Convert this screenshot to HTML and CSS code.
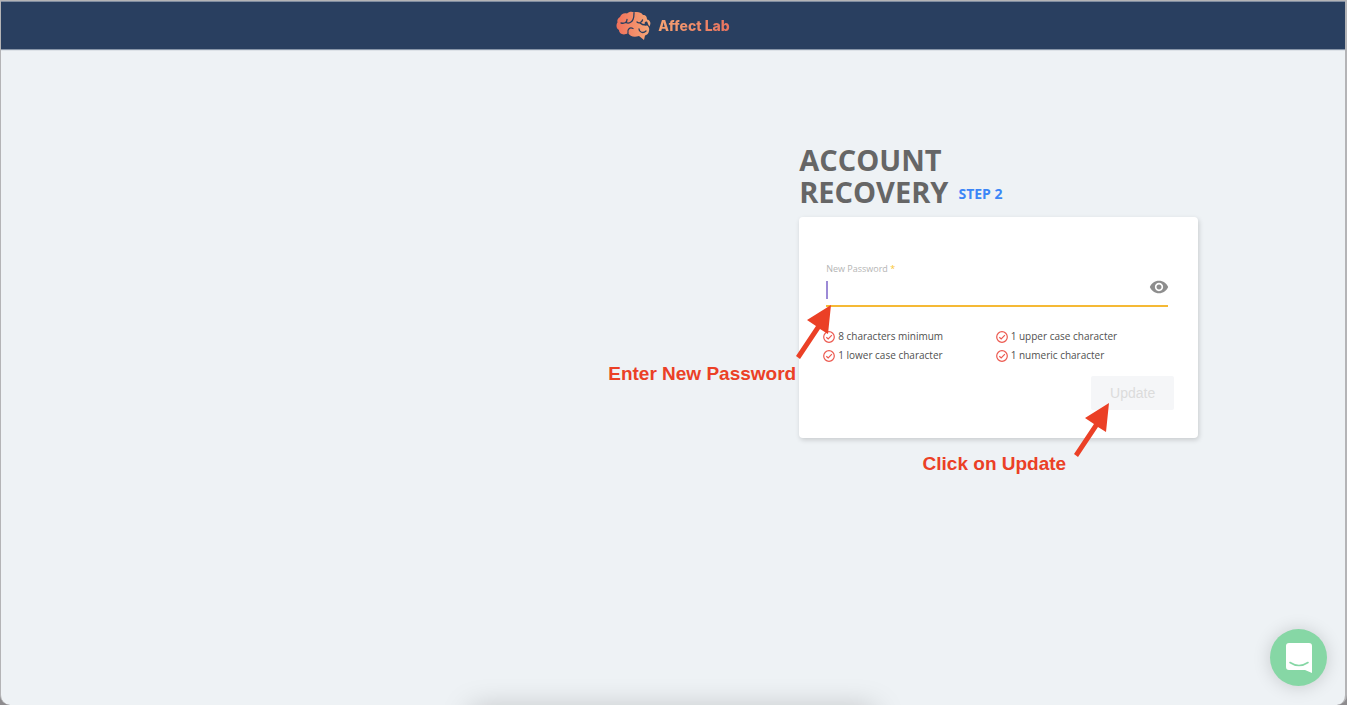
FILE: index.html
```html
<!DOCTYPE html>
<html lang="en">
<head>
    <meta charset="UTF-8">
    <meta name="viewport" content="width=device-width, initial-scale=1.0">
    <title>Affect Lab - Account Recovery</title>
    <link rel="stylesheet" href="styles.css">
</head>
<body>
    <div class="window">
        <header class="topbar">
            <a class="brand" href="#">
                <svg class="brand-icon" viewBox="0 0 36 30" aria-hidden="true">
                    <defs>
                        <linearGradient id="brain" x1="0" y1="0" x2="1" y2="0">
                            <stop offset="0" stop-color="#f0705a"/>
                            <stop offset="1" stop-color="#f6a878"/>
                        </linearGradient>
                    </defs>
                    <path fill="url(#brain)" d="M4 6C5 3 8 1.500 11 2.500C13 .5 16 0 18 1.500C21 .5 25 1 27 4C30 4 31 6 31 8.500C34 9 35 12 34 14L33.500 15.500C32 14 32 12 31 10.500C29 10 28 12 29 14C32 14 34 17 33 20C32.500 23 30.500 24 29 24.500L28 29L23 25C18 26.500 14 25.500 12 22C8 25 3 23 3 19C0 17.500 0 13.500 1.500 11.500C.8 9 2 7 4 6Z"/>
                    <g fill="none" stroke="#293f60" stroke-width="1.300" stroke-linecap="round">
                        <path d="M5 12C9 13 11 11 11 8.500M10 11.500C13 13 16 11 17 8.500C18 6.500 18 4 18 2M12 22C11 18 14 16 17 17.500M21 11C23 13 26 11 26.500 9M24 12C26 14 29 14 30 14M30 20C27 23 23 21 23 18"/>
                    </g>
                </svg>
                <span>Affect Lab</span>
            </a>
        </header>

        <main class="page">
            <section class="recovery">
                <div class="heading">
                    <h1 class="title">Account Recovery</h1>
                    <span class="step">Step 2</span>
                </div>

                <form class="card">
                    <label class="field-label" for="password">New Password <span class="required">*</span></label>
                    <div class="field">
                        <span class="caret"></span>
                        <input class="field-input" id="password" type="password" required>
                        <button class="reveal" type="button" aria-label="Show password">
                            <svg viewBox="0 0 24 24" width="20" height="20"><path fill="#8e8e8e" d="M12 4.500C7 4.500 2.730 7.610 1 12c1.730 4.390 6 7.500 11 7.500s9.270-3.110 11-7.500c-1.730-4.390-6-7.500-11-7.500zM12 17c-2.760 0-5-2.240-5-5s2.240-5 5-5 5 2.240 5 5-2.240 5-5 5zm0-8c-1.660 0-3 1.340-3 3s1.340 3 3 3 3-1.340 3-3-1.340-3-3-3z"/></svg>
                        </button>
                    </div>

                    <ul class="rules">
                        <li><svg class="check" viewBox="0 0 12 12"><circle cx="6" cy="6" r="5.300"/><path d="M3.300 6.200L5.200 8L8.900 4.200"/></svg>8 characters minimum</li>
                        <li><svg class="check" viewBox="0 0 12 12"><circle cx="6" cy="6" r="5.300"/><path d="M3.300 6.200L5.200 8L8.900 4.200"/></svg>1 upper case character</li>
                        <li><svg class="check" viewBox="0 0 12 12"><circle cx="6" cy="6" r="5.300"/><path d="M3.300 6.200L5.200 8L8.900 4.200"/></svg>1 lower case character</li>
                        <li><svg class="check" viewBox="0 0 12 12"><circle cx="6" cy="6" r="5.300"/><path d="M3.300 6.200L5.200 8L8.900 4.200"/></svg>1 numeric character</li>
                    </ul>

                    <button class="update" type="submit" disabled>Update</button>

                    <!-- help callouts over the form -->
                    <div class="callout callout-password">
                        <span>Enter New Password</span>
                        <svg class="arrow" viewBox="0 0 36 54"><path d="M0 51L20 21L11 15L35 0L32 29L24 24L4 54Z"/></svg>
                    </div>
                    <div class="callout callout-update">
                        <span>Click on Update</span>
                        <svg class="arrow" viewBox="0 0 36 54"><path d="M0 51L20 21L11 15L35 0L32 29L24 24L4 54Z"/></svg>
                    </div>
                </form>
            </section>
        </main>

        <div class="dock-shadow"></div>

        <button class="chat" type="button" aria-label="Open chat">
            <svg viewBox="0 0 28 32" width="28" height="32">
                <path fill="#fff" d="M4 1H24Q27 1 27 4V31L20 28H4Q1 28 1 25V4Q1 1 4 1Z"/>
                <path fill="none" stroke="#86d7a5" stroke-width="1.600" stroke-linecap="round" d="M5 20.500Q14 26.500 23 20.500"/>
            </svg>
        </button>
    </div>
</body>
</html>
```
FILE: styles.css
```css
* {
    box-sizing: border-box;
}

html, body {
    height: 100%;
    margin: 0;
    background-color: #8d8b8e;
    font-family: "Open Sans", "Noto Sans", sans-serif;
}

.window {
    position: relative;
    display: flex;
    flex-direction: column;
    min-height: 100%;
    overflow: hidden;
    border: 1px solid #b4b4b6;
    border-width: 1px 2px 0 1px;
    border-radius: 0 0 10px 10px;
    background-color: #eef2f5;
}

.topbar {
    display: flex;
    justify-content: center;
    align-items: center;
    height: 48px;
    border-top: 1px solid #7f8ca0;
    background-color: #293f60;
    box-shadow: 0 1px 1px #8795a8;
}

.brand {
    display: flex;
    align-items: center;
    gap: 6px;
    color: #f39470;
    font-family: Inter, sans-serif;
    font-size: 14px;
    font-weight: 800;
    text-decoration: none;
}

.brand span {
    background: linear-gradient(to right, #f6a373, #e8735f);
    background-clip: text;
    color: transparent;
}

.brand-icon {
    width: 36px;
    height: 30px;
}

.page {
    display: flex;
    flex: 1;
    justify-content: flex-end;
    align-items: flex-start;
    padding: 95px 11% 0 0;
}

.recovery {
    width: 399px;
    margin-right: -1px;
}

.heading {
    display: flex;
    align-items: flex-end;
    gap: 10px;
    margin-bottom: 9px;
    text-transform: uppercase;
}

.title {
    width: min-content;
    margin: 0;
    color: #666;
    font-size: 29px;
    font-weight: 700;
    line-height: 32px;
}

.step {
    color: #3b86f7;
    font-size: 14px;
    font-weight: 700;
    line-height: 28px;
}

.card {
    position: relative;
    display: flex;
    flex-direction: column;
    padding: 46px 30px 28px 27px;
    border-radius: 4px;
    background-color: #fff;
    box-shadow: 1px 2px 5px rgba(0, 0, 0, 0.16);
}

.field-label {
    color: #b5b5b5;
    font-size: 9px;
    line-height: 12px;
}

.required {
    color: #f9c632;
}

.field {
    display: flex;
    align-items: center;
    height: 32px;
    border-bottom: 2px solid #f5b935;
}

.caret {
    width: 2px;
    height: 18px;
    background-color: #9c8ad6;
}

.field-input {
    flex: 1;
    min-width: 0;
    border: 0;
    outline: 0;
    background: none;
    font-size: 14px;
}

.reveal {
    display: flex;
    margin: 0 -1px 6px 0;
    padding: 0;
    border: 0;
    background: none;
}

.rules {
    display: grid;
    grid-template-columns: 1fr 1fr;
    margin: 20px 0 0 -3px;
    padding: 0;
    list-style: none;
    color: #505050;
    font-size: 10px;
    font-weight: 500;
    line-height: 19px;
}

.rules li {
    display: flex;
    align-items: center;
    gap: 3px;
}

.check {
    width: 12px;
    height: 12px;
    fill: none;
    stroke: #ec5a50;
    stroke-width: 1.2;
}

.update {
    align-self: flex-end;
    width: 83px;
    height: 34px;
    margin: 11px -6px 0 0;
    border: 0;
    border-radius: 2px;
    background-color: #f5f6f8;
    color: #dcdcdc;
    font-family: "Liberation Sans", Arial, sans-serif;
    font-size: 14px;
}

.callout {
    position: absolute;
    display: flex;
    align-items: flex-end;
    color: #eb4026;
    font-family: "Liberation Sans", Arial, sans-serif;
    font-size: 19px;
    font-weight: 700;
    line-height: 22px;
    white-space: nowrap;
}

.arrow {
    width: 36px;
    height: 54px;
    margin-bottom: 26px;
    fill: #eb4026;
}

.callout-password {
    right: 366px;
    top: 88px;
}

.callout-update {
    right: 88px;
    top: 186px;
    gap: 8px;
}

.callout-update .arrow {
    margin-bottom: 18px;
}

/* soft shadow of the dock below the window */
.dock-shadow {
    position: absolute;
    left: 50%;
    bottom: -20px;
    width: 30%;
    height: 20px;
    transform: translateX(-50%);
    box-shadow: 0 5px 30px rgba(0, 0, 0, 0.25);
}

.chat {
    position: absolute;
    right: 18px;
    bottom: 19px;
    display: flex;
    justify-content: center;
    align-items: center;
    width: 57px;
    height: 57px;
    border: 0;
    border-radius: 50%;
    background-color: #86d7a5;
    box-shadow: 0 1px 18px rgba(0, 0, 0, 0.16);
}
```
